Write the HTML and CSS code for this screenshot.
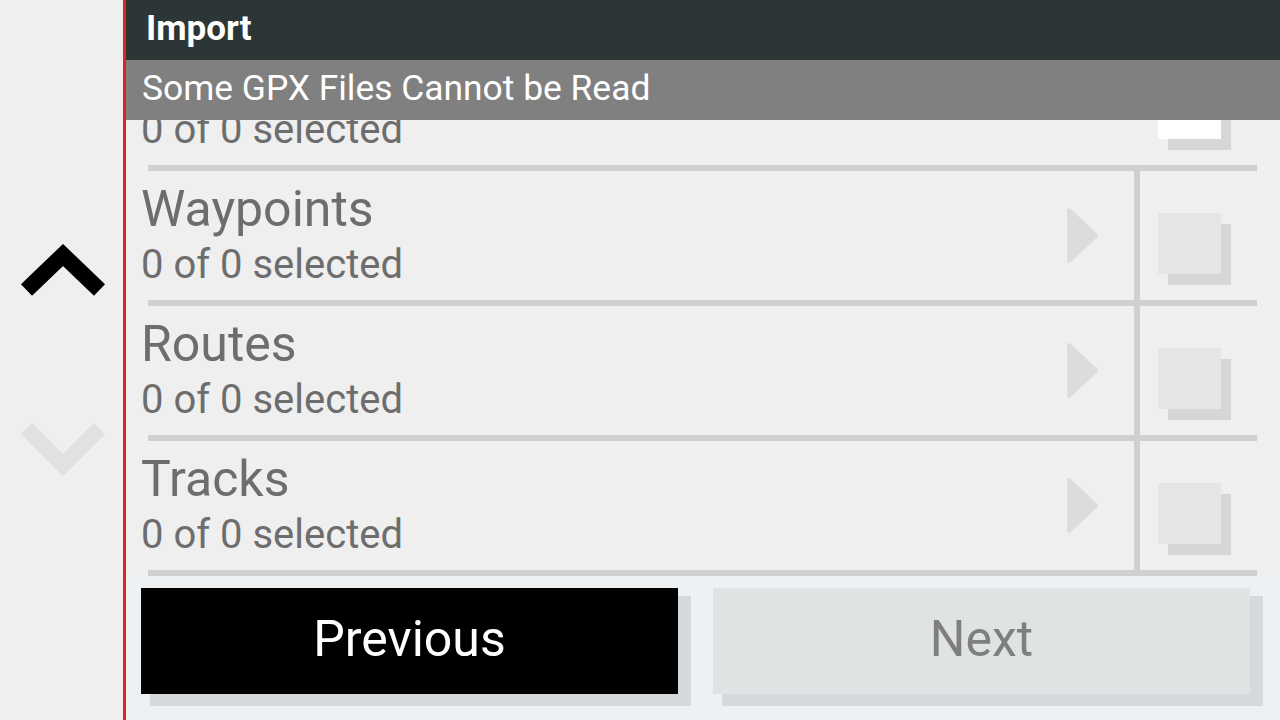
FILE: index.html
```html
<!DOCTYPE html>
<html lang="en">
<head>
    <meta charset="UTF-8">
    <meta name="viewport" content="width=device-width, initial-scale=1.0">
    <title>Import</title>
    <link rel="stylesheet" href="styles.css">
</head>
<body>

    <div class="screen">
        <!-- Scroll buttons -->
        <div class="sidebar">
            <svg class="chevron up" width="88" height="56" viewBox="0 0 88 56">
                <polyline points="7.5,48 44,13 80.5,48" />
            </svg>
            <svg class="chevron down" width="88" height="56" viewBox="0 0 88 56">
                <polyline points="7.5,6.5 44,43 80.5,6.5" />
            </svg>
        </div>

        <div class="main">
            <div class="title-bar">Import</div>
            <div class="notice">Some GPX Files Cannot be Read</div>

            <div class="list">
                <!-- first row is scrolled mostly under the notice -->
                <div class="row first">
                    <div class="row-text">
                        <div class="row-sub">0 of 0 selected</div>
                    </div>
                    <div class="check-cell"><div class="check on"></div></div>
                </div>
                <div class="sep"></div>

                <div class="row">
                    <div class="row-text">
                        <div class="row-title">Waypoints</div>
                        <div class="row-sub">0 of 0 selected</div>
                    </div>
                    <svg class="arrow" width="31" height="55" viewBox="0 0 31 55"><polygon points="2,2 29,27.5 2,53" /></svg>
                    <div class="divider"></div>
                    <div class="check-cell"><div class="check"></div></div>
                </div>
                <div class="sep"></div>

                <div class="row">
                    <div class="row-text">
                        <div class="row-title">Routes</div>
                        <div class="row-sub">0 of 0 selected</div>
                    </div>
                    <svg class="arrow" width="31" height="55" viewBox="0 0 31 55"><polygon points="2,2 29,27.5 2,53" /></svg>
                    <div class="divider"></div>
                    <div class="check-cell"><div class="check"></div></div>
                </div>
                <div class="sep"></div>

                <div class="row">
                    <div class="row-text">
                        <div class="row-title">Tracks</div>
                        <div class="row-sub">0 of 0 selected</div>
                    </div>
                    <svg class="arrow" width="31" height="55" viewBox="0 0 31 55"><polygon points="2,2 29,27.5 2,53" /></svg>
                    <div class="divider"></div>
                    <div class="check-cell"><div class="check"></div></div>
                </div>
                <div class="sep"></div>
            </div>

            <!-- Wizard buttons -->
            <div class="footer">
                <button class="button prev">Previous</button>
                <button class="button next" disabled>Next</button>
            </div>
        </div>
    </div>

</body>
</html>
```

FILE: styles.css
```css
* {
    box-sizing: border-box;
}
body {
    margin: 0;
    font-family: Roboto, "Liberation Sans", sans-serif;
    background-color: #efefef;
}
.screen {
    display: flex;
    width: 1280px;
    height: 720px;
    overflow: hidden;
}
.sidebar {
    width: 126px;
    flex-shrink: 0;
    border-right: 3px solid #e31e24;
    background-color: #efefef;
    display: flex;
    flex-direction: column;
    align-items: center;
    padding-top: 242px;
    gap: 124px;
}
.chevron {
    display: block;
    margin-left: 3px;
}
.chevron polyline {
    fill: none;
    stroke-width: 16;
    stroke-linecap: butt;
    stroke-linejoin: miter;
}
.chevron.up polyline {
    stroke: #000;
}
.chevron.down polyline {
    stroke: #e1e1e1;
}
.main {
    flex: 1;
    display: flex;
    flex-direction: column;
    min-width: 0;
}
.title-bar {
    height: 60px;
    flex-shrink: 0;
    background-color: #2c3637;
    color: #fff;
    font-weight: bold;
    font-size: 35px;
    line-height: 58px;
    padding-left: 20px;
}
.notice {
    height: 60px;
    flex-shrink: 0;
    background-color: #808080;
    color: #fff;
    font-size: 35.4px;
    line-height: 57px;
    padding-left: 16px;
    position: relative;
    z-index: 1;
}
.list {
    flex: 1;
    overflow: hidden;
    background-color: #efefef;
}
.row {
    display: flex;
    align-items: center;
    height: 129px;
    padding-left: 15px;
}
.row.first {
    margin-top: -84px;
}
.row-text {
    flex: 1;
    align-self: flex-start;
    padding-top: 12px;
    color: #6d6d6d;
}
.row.first .row-text {
    padding-top: 64px;
}
.row-title {
    font-size: 50px;
    line-height: 52px;
}
.row-sub {
    font-size: 40px;
    line-height: 52px;
    margin-top: 4px;
}
.arrow {
    display: block;
    margin-right: 36px;
}
.arrow polygon {
    fill: #dcdcdc;
    stroke: #dcdcdc;
    stroke-width: 4;
    stroke-linejoin: round;
}
.divider {
    width: 6px;
    align-self: stretch;
    background-color: #cfcfcf;
}
.check-cell {
    width: 140px;
    align-self: stretch;
    padding: 42px 0 0 18px;
}
.row.first .check-cell {
    margin-left: 6px;
}
.check {
    width: 63px;
    height: 61px;
    background-color: #e4e5e6;
    box-shadow: 10px 11px 0 #d6d6d6;
}
.check.on {
    background-color: #fff;
}
.sep {
    height: 6px;
    margin: 0 23px 0 22px;
    background-color: #cfcfcf;
}
.footer {
    height: 144px;
    flex-shrink: 0;
    background-color: #edf1f3;
    display: grid;
    grid-template-columns: 1fr 1fr;
    gap: 35px;
    padding: 12px 30px 0 15px;
    align-items: start;
}
.button {
    height: 106px;
    border: none;
    padding: 0 0 4px;
    font-family: Roboto, "Liberation Sans", sans-serif;
    font-size: 50px;
    box-shadow: 11px 10px 0 2px #d5d9dc;
    cursor: pointer;
}
.button.prev {
    background-color: #000;
    color: #fff;
}
.button.next {
    background-color: #dfe3e4;
    color: #7f7f7f;
}
```
